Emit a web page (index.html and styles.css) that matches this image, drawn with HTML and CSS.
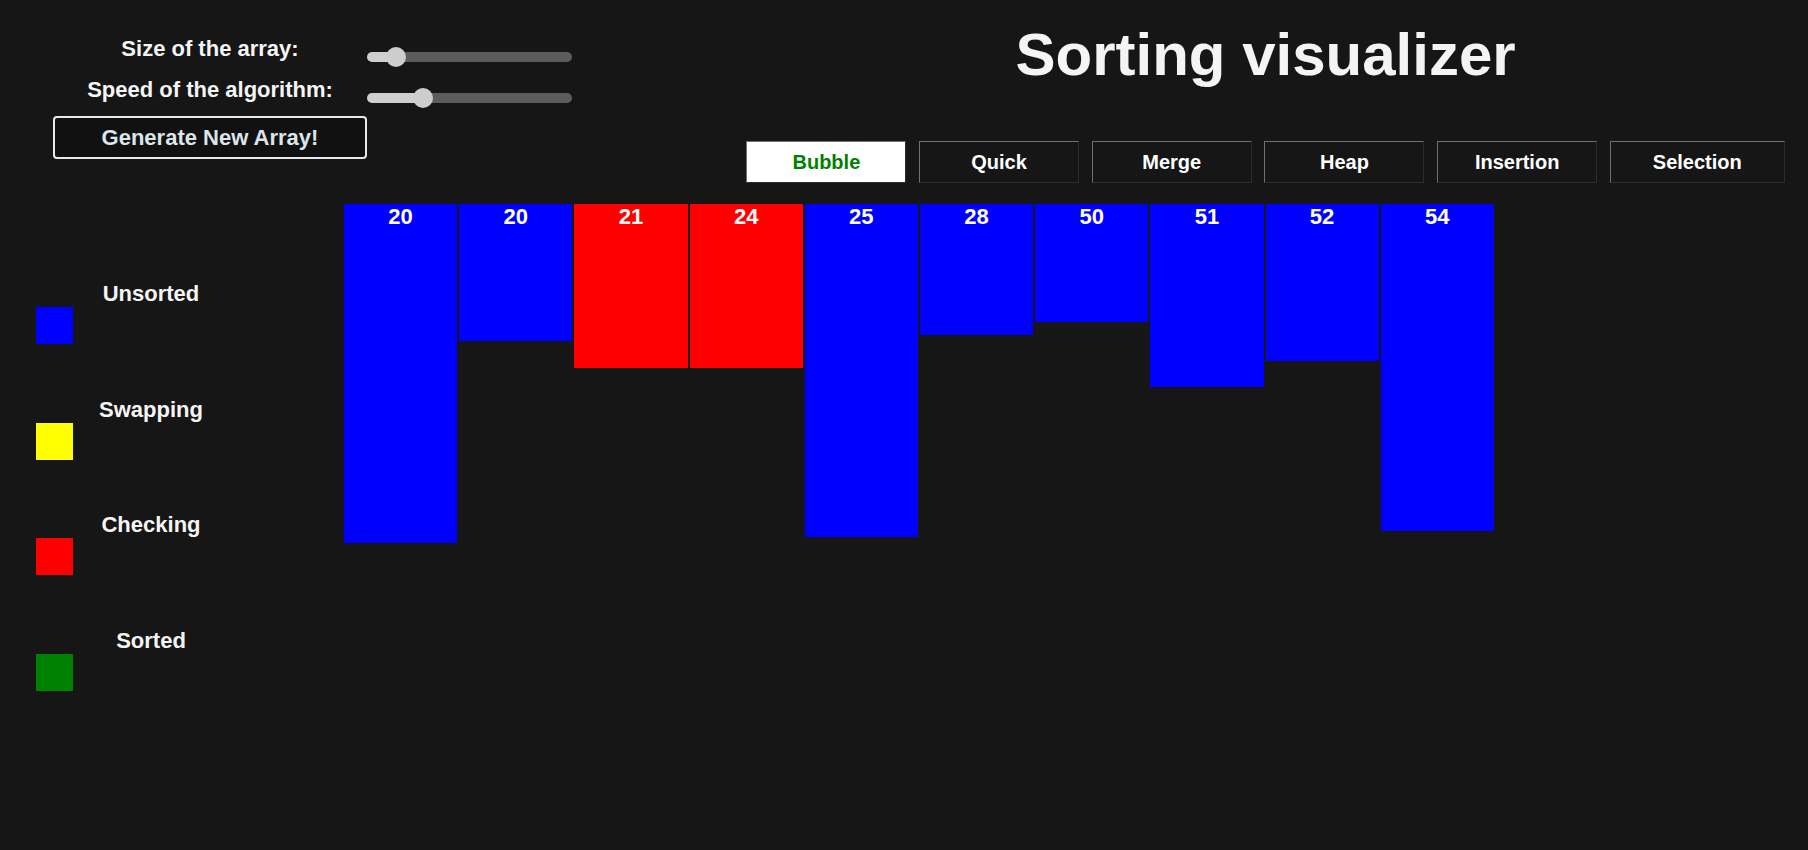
FILE: index.html
```html
<!DOCTYPE html>
<html lang="en">
<head>
<meta charset="utf-8">
<title>Sorting visualizer</title>
<link rel="stylesheet" href="styles.css">
</head>
<body>
<header class="top">
  <div class="controls">
    <div class="ctrl-row">
      <label class="ctrl-label" for="size">Size of the array:</label>
      <input id="size" class="slider" type="range" min="0" max="100" value="10" style="--fill: 28.5px">
    </div>
    <div class="ctrl-row">
      <label class="ctrl-label" for="speed">Speed of the algorithm:</label>
      <input id="speed" class="slider" type="range" min="0" max="100" value="25" style="--fill: 56px">
    </div>
    <button class="gen-btn">Generate New Array!</button>
  </div>
  <div class="heading">
    <h1 class="title">Sorting visualizer</h1>
    <nav class="tabs">
      <button class="tab active">Bubble</button>
      <button class="tab">Quick</button>
      <button class="tab">Merge</button>
      <button class="tab">Heap</button>
      <button class="tab">Insertion</button>
      <button class="tab wide">Selection</button>
    </nav>
  </div>
</header>
<main class="stage">
  <aside class="legend">
    <div class="legend-item"><span class="legend-label">Unsorted</span><span class="swatch blue"></span></div>
    <div class="legend-item"><span class="legend-label">Swapping</span><span class="swatch yellow"></span></div>
    <div class="legend-item"><span class="legend-label">Checking</span><span class="swatch red"></span></div>
    <div class="legend-item"><span class="legend-label">Sorted</span><span class="swatch green"></span></div>
  </aside>
  <section class="bars">
    <div class="bar blue" style="height: 339px">20</div>
    <div class="bar blue" style="height: 137px">20</div>
    <div class="bar red" style="height: 164px">21</div>
    <div class="bar red" style="height: 164px">24</div>
    <div class="bar blue" style="height: 333px">25</div>
    <div class="bar blue" style="height: 131px">28</div>
    <div class="bar blue" style="height: 118px">50</div>
    <div class="bar blue" style="height: 183px">51</div>
    <div class="bar blue" style="height: 157px">52</div>
    <div class="bar blue" style="height: 327px">54</div>
  </section>
</main>
</body>
</html>
```

FILE: styles.css
```css
html, body {
  margin: 0;
  height: 100%;
  background: #161616;
}

body {
  font-family: "Liberation Sans", Arial, sans-serif;
  font-weight: bold;
  color: #f5f5f5;
  overflow: hidden;
}

/* ---------- header ---------- */
.top {
  display: flex;
}

.controls {
  width: 40%;
  box-sizing: border-box;
  padding: 36px 0 0 53px;
  display: flex;
  flex-direction: column;
  align-items: flex-start;
}

.ctrl-row {
  display: flex;
  height: 31px;
}

.ctrl-row + .ctrl-row {
  margin-top: 10px;
}

.ctrl-label {
  width: 314px;
  text-align: center;
  font-size: 22px;
  line-height: 26px;
  align-self: flex-start;
  color: #f5f5f5;
}

.slider {
  -webkit-appearance: none;
  appearance: none;
  align-self: flex-end;
  width: 205px;
  height: 20px;
  margin: 0;
  padding: 0;
  background: transparent;
}

.slider::-webkit-slider-runnable-track {
  height: 10px;
  border-radius: 5px;
  background: linear-gradient(to right, #cfcfcf 0, #cfcfcf var(--fill), #5c5c5c var(--fill), #5c5c5c 100%);
}

.slider::-webkit-slider-thumb {
  -webkit-appearance: none;
  appearance: none;
  width: 20px;
  height: 20px;
  margin-top: -5px;
  border-radius: 50%;
  background: #cdcdcd;
  border: none;
}

.gen-btn {
  width: 314px;
  height: 43px;
  margin-top: 8px;
  padding: 0;
  box-sizing: border-box;
  border: 2px solid #e4eaea;
  border-radius: 4px;
  background: #111111;
  color: #dce5ea;
  font-family: "Liberation Sans", Arial, sans-serif;
  font-weight: bold;
  font-size: 22px;
}

.heading {
  flex: 1;
  display: flex;
  flex-direction: column;
  align-items: center;
  padding: 20px 0 21px;
}

.title {
  margin: 0;
  font-size: 60px;
  line-height: 69px;
  color: #f4f4f4;
}

.tabs {
  display: flex;
  gap: 12.7px;
  margin-top: 52px;
}

.tab {
  width: 160px;
  height: 42px;
  box-sizing: border-box;
  padding: 0;
  border: 1px solid;
  border-color: #707070 #2c2c2c #2c2c2c #707070;
  background: #161616;
  color: #ffffff;
  font-family: "Liberation Sans", Arial, sans-serif;
  font-weight: bold;
  font-size: 20px;
}

.tab.wide {
  width: 175px;
}

.tab.active {
  background: #ffffff;
  color: #008000;
}

/* ---------- stage ---------- */
.stage {
  display: flex;
  align-items: flex-start;
}

.legend {
  width: 343px;
  flex: none;
  box-sizing: border-box;
  padding: 77px 0 0 36px;
  display: flex;
  flex-direction: column;
  gap: 52.5px;
}

.legend-item {
  display: flex;
  flex-direction: column;
  align-items: flex-start;
}

.legend-label {
  width: 230px;
  text-align: center;
  font-size: 22px;
  line-height: 25px;
  margin-bottom: 1px;
}

.swatch {
  width: 37px;
  height: 37px;
}

.bars {
  display: flex;
  align-items: flex-start;
}

.bar {
  width: 113.2px;
  margin: 0 1px;
  text-align: center;
  font-size: 22px;
  color: #ffffff;
}

.blue { background: #0000ff; }
.red { background: #ff0000; }
.yellow { background: #ffff00; }
.green { background: #008000; }
```
